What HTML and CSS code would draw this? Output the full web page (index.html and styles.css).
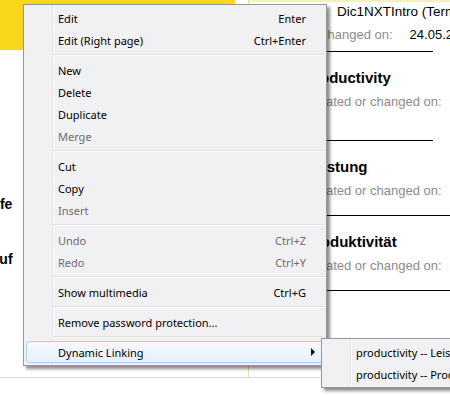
FILE: index.html
```html
<!DOCTYPE html>
<html lang="de">

<head>
  <meta charset="utf-8">
  <title>Dic1NXTIntro</title>
  <link rel="stylesheet" href="styles.css">
</head>

<body>
  <div class="screen">
    <div class="left-pane">
      <div class="left-head"></div>
      <div class="left-list">
        <div class="left-word word-a">Hilfe</div>
        <div class="left-word word-b">Verkauf</div>
      </div>
    </div>

    <div class="right-pane">
      <div class="doc-title">Dic1NXTIntro (TermSet)</div>
      <div class="doc-meta">
        <span class="meta-label">Created or changed on:</span>
        <span class="meta-value">24.05.2012</span>
      </div>

      <div class="entry entry-first">
        <div class="entry-name">productivity</div>
        <div class="entry-meta">Created or changed on: <span class="entry-date">24.05.2012</span></div>
      </div>
      <div class="entry entry-wide">
        <div class="entry-name">Leistung</div>
        <div class="entry-meta">Created or changed on: <span class="entry-date">24.05.2012</span></div>
      </div>
      <div class="entry entry-wide">
        <div class="entry-name">Produktivität</div>
        <div class="entry-meta">Created or changed on: <span class="entry-date">24.05.2012</span></div>
      </div>
    </div>
  </div>

  <!-- context menu -->
  <div class="menu main-menu">
    <div class="item"><span>Edit</span><span class="key">Enter</span></div>
    <div class="item"><span>Edit (Right page)</span><span class="key">Ctrl+Enter</span></div>
    <div class="sep"></div>
    <div class="item"><span>New</span></div>
    <div class="item"><span>Delete</span></div>
    <div class="item"><span>Duplicate</span></div>
    <div class="item disabled"><span>Merge</span></div>
    <div class="sep"></div>
    <div class="item"><span>Cut</span></div>
    <div class="item"><span>Copy</span></div>
    <div class="item disabled"><span>Insert</span></div>
    <div class="sep"></div>
    <div class="item disabled"><span>Undo</span><span class="key">Ctrl+Z</span></div>
    <div class="item disabled"><span>Redo</span><span class="key">Ctrl+Y</span></div>
    <div class="sep"></div>
    <div class="item"><span>Show multimedia</span><span class="key">Ctrl+G</span></div>
    <div class="sep"></div>
    <div class="item"><span>Remove password protection...</span></div>
    <div class="sep"></div>
    <div class="item active"><span>Dynamic Linking</span><span class="arrow"></span></div>
  </div>

  <div class="menu sub-menu">
    <div class="item"><span>productivity -- Leistung</span></div>
    <div class="item"><span>productivity -- Produktivität</span></div>
  </div>
</body>

</html>
```

FILE: styles.css
```css
body {
  margin: 0;
  width: 450px;
  height: 395px;
  overflow: hidden;
  position: relative;
  background-color: #fff;
  font-family: "Liberation Sans", Arial, sans-serif;
}
.screen {
  display: flex;
  height: 377px;
  border-bottom: 1px solid #efe29c;
}
.left-pane {
  width: 248px;
  border-right: 1px solid #e9dfa6;
  overflow: hidden;
}
.left-head {
  height: 50px;
  margin-right: 13px;
  background-color: #f9d71c;
}
.left-list {
  padding-top: 144px;
}
.left-word {
  font-size: 14px;
  font-weight: bold;
  line-height: 20px;
  color: #000;
  white-space: nowrap;
}
.word-a {
  margin-left: -18px;
}
.word-b {
  margin-top: 35px;
  margin-left: -38px;
}
.right-pane {
  flex: 1;
  overflow: hidden;
  border-top: 2px solid #f6efc4;
}
.doc-title {
  padding-left: 88px;
  font-size: 13.5px;
  line-height: 19px;
  white-space: nowrap;
  color: #000;
}
.doc-meta {
  display: flex;
  padding: 5px 0 7px 7px;
  margin-right: 17px;
  border-bottom: 1px solid #000;
  font-size: 13px;
  line-height: 18px;
  white-space: nowrap;
}
.meta-label {
  color: #8c8c8c;
}
.meta-value {
  margin-left: 17px;
  color: #000;
}
.entry {
  padding: 16px 0 14px 56px;
  border-bottom: 1px solid #000;
  white-space: nowrap;
}
.entry-first {
  padding-bottom: 28px;
  margin-right: 17px;
}
.entry-name {
  font-size: 15px;
  font-weight: bold;
  line-height: 20px;
  color: #000;
}
.entry-meta {
  margin-top: 4px;
  font-size: 13px;
  line-height: 20px;
  color: #8c8c8c;
}
.entry-date {
  margin-left: 10px;
  color: #d4d4d4;
}

/* Windows 7 style popup menu */
.menu {
  position: absolute;
  padding: 2px;
  border: 1px solid #979797;
  background: linear-gradient(to right, transparent 28px, #e2e3e3 28px, #e2e3e3 29px, #fff 29px, #fff 30px, transparent 30px), #f1f0f3;
  box-shadow: 3px 3px 3px rgba(0, 0, 0, 0.45);
  font-family: "Noto Sans", "Open Sans", sans-serif;
  font-size: 11px;
  color: #000;
}
.main-menu {
  left: 23px;
  top: 4px;
  width: 298px;
}
.sub-menu {
  left: 321px;
  top: 338px;
  width: 150px;
}
.item {
  display: flex;
  align-items: center;
  height: 22px;
  padding: 0 18px 0 32px;
  white-space: nowrap;
}
.item .key {
  margin-left: auto;
}
.disabled {
  color: #6d6d6d;
}
.active {
  box-sizing: border-box;
  padding-left: 31px;
  padding-right: 8px;
  border: 1px solid #aecff7;
  border-radius: 3px;
  background: linear-gradient(#f6f9fe, #e8f0fc);
}
.arrow {
  margin-left: auto;
  width: 0;
  height: 0;
  border-top: 4px solid transparent;
  border-bottom: 4px solid transparent;
  border-left: 4px solid #000;
}
.sep {
  height: 8px;
  margin-left: 26px;
  background: linear-gradient(transparent 3px, #e0e0e0 3px, #e0e0e0 4px, #fff 4px, #fff 5px, transparent 5px);
}
```
